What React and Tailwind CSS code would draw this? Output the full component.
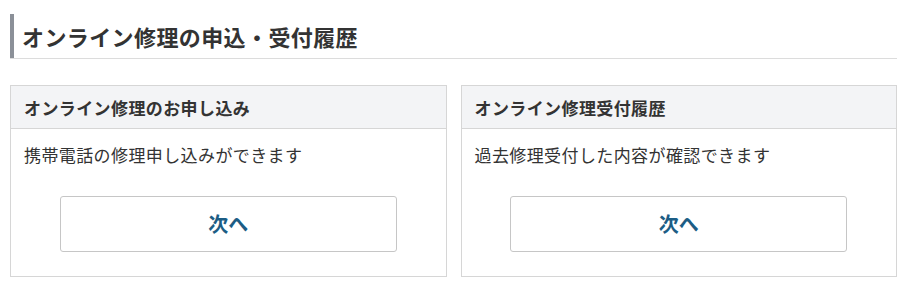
import React from "react";

const cards = [
  { title: "オンライン修理のお申し込み", text: "携帯電話の修理申し込みができます" },
  { title: "オンライン修理受付履歴", text: "過去修理受付した内容が確認できます" },
];

const App = () => {
  return (
    <div
      className="w-[910px] h-[287px] bg-white text-[#333] pl-[10px] pt-[14px]"
      style={{ fontFamily: '"Noto Sans CJK JP", "Noto Sans", sans-serif' }}
    >
      <div className="w-[887px]">
        <h2 className="h-[44px] border-l-4 border-[#8b9098] pl-[8px] flex items-center text-[22px] font-bold leading-none tracking-[0.4px] text-[#333]">
          オンライン修理の申込・受付履歴
        </h2>
        <div className="h-px bg-[#dcdcdc]" />

        <div className="mt-[26px] grid grid-cols-2 gap-[14px]">
          {cards.map((card) => (
            <div key={card.title} className="border border-[#d6d6d6] bg-white h-[192px] flex flex-col">
              <div className="h-[43px] bg-[#f3f4f6] border-b border-[#d6d6d6] px-[13px] flex items-center text-[17px] font-bold leading-none tracking-[0.4px] text-[#333]">
                {card.title}
              </div>
              <p className="px-[13px] pt-[15px] text-[17px] leading-[21px] tracking-[0.4px] text-[#333]">
                {card.text}
              </p>
              <div className="flex justify-center mt-[31px]">
                <button className="w-[337px] h-[56px] border border-[#c6c6c6] rounded-[3px] bg-white text-[20px] font-bold leading-none text-[#1c5d85]">
                  次へ
                </button>
              </div>
            </div>
          ))}
        </div>
      </div>
    </div>
  );
};

export default App;
